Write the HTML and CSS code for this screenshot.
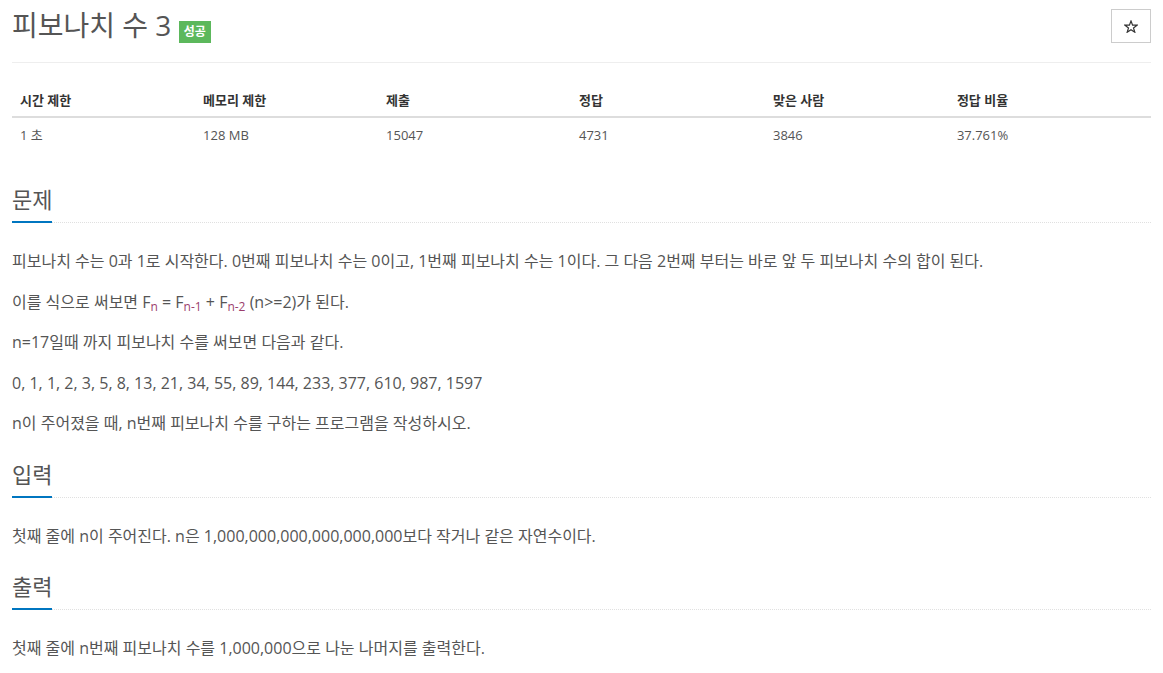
FILE: index.html
```html
<!doctype html>
<html>

<head>
   <meta charset="utf-8">
   <title>피보나치 수 3</title>
   <link rel="stylesheet" href="styles.css">
</head>

<body>
   <div class="container">
      <div class="pageHeader">
         <h1 class="title">피보나치 수 3 <span class="label">성공</span></h1>
         <button class="starBtn">
            <svg width="14" height="13" viewBox="0 0 14 13">
               <path d="M7 1 L8.6 5.1 L13 5.2 L9.5 7.9 L10.8 12.2 L7 9.7 L3.2 12.2 L4.5 7.9 L1 5.2 L5.4 5.1 Z" fill="none" stroke="#333" stroke-width="1.2" stroke-linejoin="miter"/>
            </svg>
         </button>
      </div>

      <table class="info">
         <thead>
            <tr>
               <th class="c1">시간 제한</th>
               <th class="c2">메모리 제한</th>
               <th class="c3">제출</th>
               <th class="c4">정답</th>
               <th class="c5">맞은 사람</th>
               <th class="c6">정답 비율</th>
            </tr>
         </thead>
         <tbody>
            <tr>
               <td>1 초</td>
               <td>128 MB</td>
               <td>15047</td>
               <td>4731</td>
               <td>3846</td>
               <td>37.761%</td>
            </tr>
         </tbody>
      </table>

      <section class="problemSection">
         <div class="headline">
            <h2>문제</h2>
         </div>
         <div class="body">
            <p>피보나치 수는 0과 1로 시작한다. 0번째 피보나치 수는 0이고, 1번째 피보나치 수는 1이다. 그 다음 2번째 부터는 바로 앞 두 피보나치 수의 합이 된다.</p>
            <p>이를 식으로 써보면 F<sub>n</sub> = F<sub>n-1</sub> + F<sub>n-2</sub> (n&gt;=2)가 된다.</p>
            <p>n=17일때 까지 피보나치 수를 써보면 다음과 같다.</p>
            <p>0, 1, 1, 2, 3, 5, 8, 13, 21, 34, 55, 89, 144, 233, 377, 610, 987, 1597</p>
            <p>n이 주어졌을 때, n번째 피보나치 수를 구하는 프로그램을 작성하시오.</p>
         </div>
      </section>

      <section class="problemSection">
         <div class="headline">
            <h2>입력</h2>
         </div>
         <div class="body">
            <p>첫째 줄에 n이 주어진다. n은 1,000,000,000,000,000,000보다 작거나 같은 자연수이다.</p>
         </div>
      </section>

      <section class="problemSection">
         <div class="headline">
            <h2>출력</h2>
         </div>
         <div class="body">
            <p>첫째 줄에 n번째 피보나치 수를 1,000,000으로 나눈 나머지를 출력한다.</p>
         </div>
      </section>
   </div>
</body>

</html>
```

FILE: styles.css
```css
html,
body {
   padding: 0;
   margin: 0;
   background: #FFF;
   font-family: "Open Sans", "Noto Sans CJK KR", sans-serif;
   font-size: 13px;
   color: #555;
}

.container {
   padding: 0 12px;
}

.pageHeader {
   display: flex;
   justify-content: space-between;
   align-items: flex-start;
   padding-top: 5px;
   padding-bottom: 17px;
   border-bottom: 1px solid #eee;
}

.title {
   margin: 0;
   font-size: 28px;
   font-weight: 400;
   line-height: 40px;
   color: #555;
}

.label {
   display: inline-block;
   background: #5cb85c;
   color: #FFF;
   font-size: 12px;
   font-weight: 700;
   line-height: 22px;
   padding: 0 5px;
   vertical-align: baseline;
}

.starBtn {
   display: flex;
   align-items: center;
   justify-content: center;
   width: 40px;
   height: 34px;
   margin-top: 4px;
   background: #FFF;
   border: 1px solid #ccc;
   padding: 0;
   cursor: pointer;
}

.info {
   width: 100%;
   border-collapse: collapse;
   margin-top: 20px;
   margin-bottom: 31px;
}

.info th,
.info td {
   text-align: left;
   padding: 8px;
   line-height: 19px;
}

.info th {
   padding-bottom: 6px;
   font-weight: 700;
   color: #333;
   border-bottom: 2px solid #ddd;
}

.c1 { width: 16.07%; }
.c2 { width: 16.07%; }
.c3 { width: 16.94%; }
.c4 { width: 17.03%; }
.c5 { width: 16.15%; }
.c6 { width: 17.74%; }

.problemSection {
   margin-top: 20px;
}

.headline {
   border-bottom: 1px dotted #e0e0e0;
   margin-bottom: 23px;
   line-height: 0;
}

.headline h2 {
   display: inline-block;
   margin: 0 0 -1px;
   font-size: 22px;
   font-weight: 400;
   line-height: 30px;
   padding-bottom: 7px;
   border-bottom: 2px solid #0076C0;
   color: #555;
}

.body p {
   margin: 0 0 10px;
   font-size: 16px;
   line-height: 30.5px;
}

.body sub {
   position: relative;
   bottom: -0.25em;
   vertical-align: baseline;
   line-height: 0;
   color: #9b3d6b;
   font-size: 12px;
}
```
